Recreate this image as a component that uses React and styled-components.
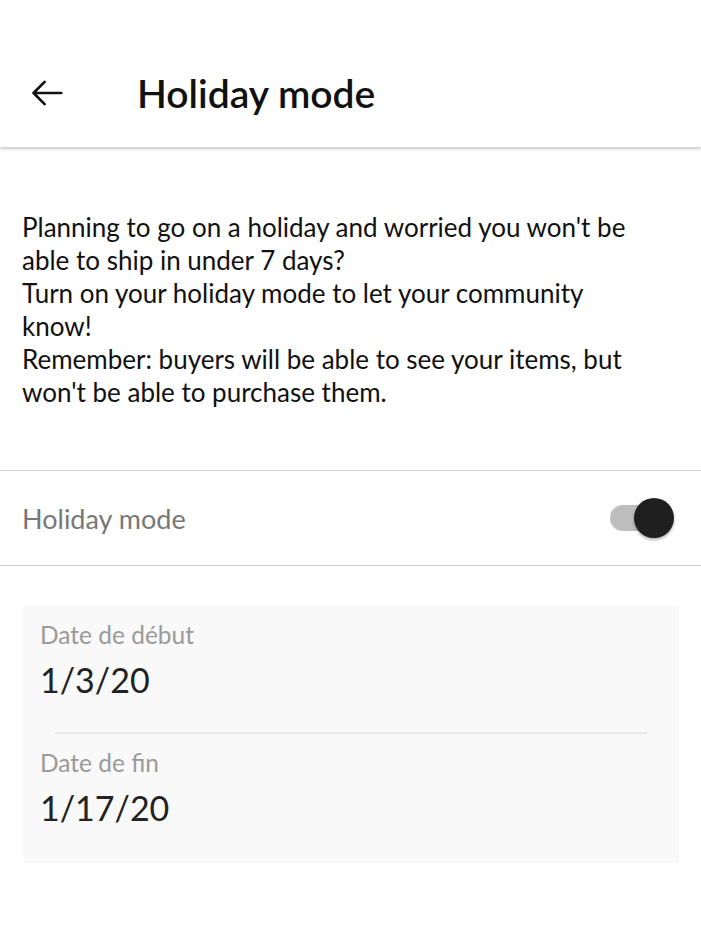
import styled, { createGlobalStyle } from 'styled-components';

const GlobalStyle = createGlobalStyle`
  html, body {
    margin: 0;
    padding: 0;
    background: #fff;
    font-family: Lato, "Noto Sans", sans-serif;
  }
  * { box-sizing: border-box; }
`;

function BackArrow() {
  return (
    <svg width="38" height="38" viewBox="0 0 24 24" fill="none">
      <path
        d="M21 12H3.5M10.5 5l-7 7 7 7"
        stroke="#111"
        strokeWidth="1.7"
        strokeLinecap="round"
        strokeLinejoin="round"
      />
    </svg>
  );
}

function Toolbar() {
  return (
    <Bar>
      <BackButton type="button" aria-label="Retour">
        <BackArrow />
      </BackButton>
      <Title>Holiday mode</Title>
    </Bar>
  );
}

function DateField({ label, value }) {
  return (
    <Field>
      <FieldLabel>{label}</FieldLabel>
      <FieldValue>{value}</FieldValue>
    </Field>
  );
}

export default function App() {
  return (
    <>
      <GlobalStyle />
      <Page>
        <Toolbar />
        <Intro>
          Planning to go on a holiday and worried you won't be able to ship in under 7 days?
          <br />
          Turn on your holiday mode to let your community know!
          <br />
          Remember: buyers will be able to see your items, but won't be able to purchase them.
        </Intro>
        <SwitchRow>
          <RowLabel>Holiday mode</RowLabel>
          <Switch>
            <Track />
            <Thumb />
          </Switch>
        </SwitchRow>
        <DateCard>
          <DateField label="Date de début" value="1/3/20" />
          <CardDivider />
          <DateField label="Date de fin" value="1/17/20" />
        </DateCard>
      </Page>
    </>
  );
}

const Page = styled.div`
  width: 701px;
  min-height: 927px;
  background: #fff;
`;

const Bar = styled.header`
  display: flex;
  align-items: center;
  height: 147px;
  padding: 38px 0 0 27px;
  box-shadow: 0 2px 3px rgba(0, 0, 0, 0.22);
  position: relative;
`;

const BackButton = styled.button`
  display: flex;
  align-items: center;
  justify-content: center;
  padding: 0;
  border: none;
  background: none;
  width: 40px;
  height: 40px;
  margin-right: 70px;
`;

const Title = styled.h1`
  margin: 0;
  font-size: 39px;
  font-weight: 600;
  color: #111;
`;

const Intro = styled.p`
  margin: 0;
  padding: 64px 45px 0 22px;
  height: 323px;
  font-size: 26px;
  line-height: 33px;
  color: #111;
`;

const SwitchRow = styled.div`
  display: flex;
  align-items: center;
  justify-content: space-between;
  height: 96px;
  padding: 0 27px 0 22px;
  border-top: 1px solid #d0d0d0;
  border-bottom: 1px solid #d0d0d0;
`;

const RowLabel = styled.span`
  font-size: 27px;
  color: #777;
`;

const Switch = styled.div`
  position: relative;
  width: 64px;
  height: 42px;
`;

const Track = styled.div`
  position: absolute;
  left: 0;
  top: 8px;
  width: 54px;
  height: 26px;
  border-radius: 13px;
  background: #bdbdbd;
`;

const Thumb = styled.div`
  position: absolute;
  right: 0;
  top: 1px;
  width: 40px;
  height: 40px;
  border-radius: 50%;
  background: #1f1f1f;
  box-shadow: 0 2px 3px rgba(0, 0, 0, 0.3);
`;

const DateCard = styled.section`
  margin: 40px 22px 0 23px;
  background: #f9f9f9;
  padding: 14px 32px 30px 17px;
  height: 257px;
`;

const Field = styled.div`
  display: flex;
  flex-direction: column;
  gap: 10px;
`;

const FieldLabel = styled.span`
  font-size: 24.5px;
  color: #9a9a9a;
`;

const FieldValue = styled.span`
  font-size: 34px;
  color: #222;
`;

const CardDivider = styled.hr`
  margin: 32px 0 14px 15px;
  border: none;
  border-top: 2px solid #e8e8e8;
`;
